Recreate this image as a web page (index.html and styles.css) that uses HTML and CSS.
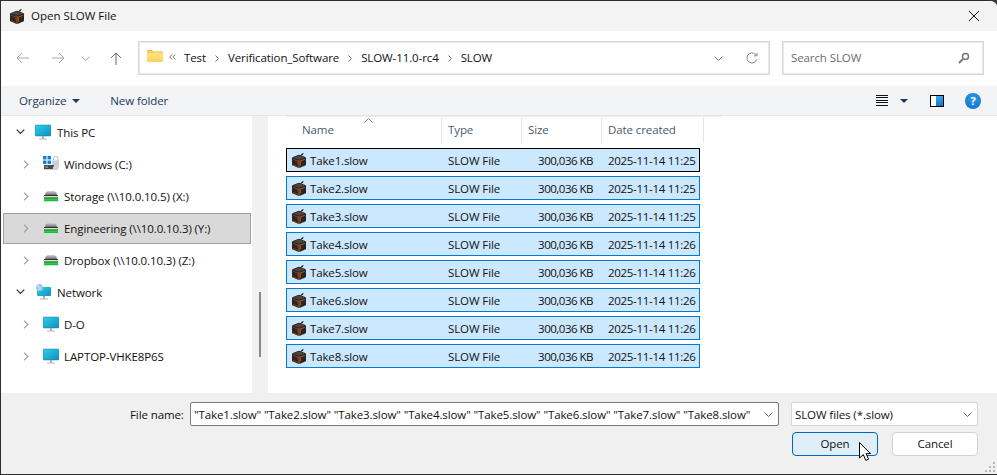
FILE: index.html
```html
<!DOCTYPE html>
<html lang="en">
<head>
<meta charset="utf-8">
<title>Open SLOW File</title>
<link rel="stylesheet" href="styles.css">
</head>
<body>
<svg class="defs" width="0" height="0" aria-hidden="true">
  <defs>
    <linearGradient id="scr" x1="0" y1="0" x2="1" y2="1"><stop offset="0" stop-color="#2fd0e6"/><stop offset="1" stop-color="#0f8ec4"/></linearGradient>
    <linearGradient id="fold" x1="0" y1="0" x2="0" y2="1"><stop offset="0" stop-color="#ffe58f"/><stop offset="1" stop-color="#fcd25c"/></linearGradient>
    <linearGradient id="grn" x1="0" y1="0" x2="0" y2="1"><stop offset="0" stop-color="#5fe85f"/><stop offset="1" stop-color="#1fb040"/></linearGradient>
    <linearGradient id="hood" x1="0" y1="0" x2="0" y2="1"><stop offset="0" stop-color="#d4d4d4"/><stop offset="1" stop-color="#6a6a6a"/></linearGradient>
    <symbol id="cube" viewBox="0 0 16 16">
      <path d="M9.500 4C9.700 2.400 10.800 1.300 12.600 1 12.500 2.700 11.400 3.800 9.500 4Z" fill="#2e2e2e"/>
      <path d="M1 6.200Q1 5.300 1.900 4.900L7 3Q8 2.700 9 3L14.200 4.900Q15 5.300 15 6.200V12.400Q15 13.200 14.200 13.600L9 15.700Q8 16 7 15.700L1.900 13.600Q1 13.200 1 12.400Z" fill="#2a2522"/>
      <path d="M2 5.600 8 3.500l6 2.100L8 7.800Z" fill="#4a4543"/>
      <path d="M8 8v7.500" stroke="#a8501c" stroke-width="1.200"/>
      <path d="M2.200 7.300 6.800 9.100v2.400" fill="none" stroke="#8f4317" stroke-width="1"/>
      <path d="M2.200 12.600 6.800 14.500" fill="none" stroke="#7a3a16" stroke-width="1"/>
      <path d="M13.800 7.300 9.300 9.100v4.400" fill="none" stroke="#b5581e" stroke-width="1"/>
    </symbol>
    <symbol id="monitor" viewBox="0 0 16 16">
      <rect x="0" y="1" width="16" height="11" rx="1" fill="url(#scr)" stroke="#1a7fa8" stroke-width=".5"/>
      <rect x="7" y="12" width="2" height="2.500" fill="#9aa8b0"/>
      <rect x="4" y="14.500" width="8" height="1" fill="#aab4ba"/>
    </symbol>
    <symbol id="drive" viewBox="0 0 16 16">
      <path d="M2.500 5C2.800 3.500 4 3 8 3s5.200.5 5.500 2L14 7H2Z" fill="url(#hood)"/>
      <rect x="1" y="7" width="14" height="1" fill="#2f2f2f"/>
      <rect x="1" y="8" width="14" height="1" fill="#d9dfda"/>
      <rect x="1" y="9" width="14" height="4" fill="url(#grn)"/>
      <rect x="1" y="9.600" width="14" height=".9" fill="#1d6b33"/>
      <rect x="1" y="13" width="14" height="1" fill="#bfe8c6"/>
    </symbol>
    <symbol id="win" viewBox="0 0 16 16">
      <path d="M0 0h3.500v3.500H0zM4.500 0H8v3.500H4.500zM0 4.500h3.500V8H0zM4.500 4.500H8V8H4.500z" fill="#1583d8"/>
      <path d="M10.500 4.500V2.500a2.200 2.200 0 0 1 4.400 0V5" fill="none" stroke="#a9bcca" stroke-width="1"/>
      <rect x="9" y="4.500" width="7" height="6" fill="#c6d0d8"/>
      <rect x="1" y="9" width="10" height="4" fill="#4a4a4a"/>
      <rect x="2" y="10.500" width="3" height="1" fill="#7fd67f"/>
      <rect x="1" y="13" width="13" height="1" fill="#cfd5d0"/>
      <rect x="10" y="10.500" width="5.500" height="3" fill="#c9d3da"/>
    </symbol>
    <symbol id="net" viewBox="0 0 16 16">
      <rect x="2" y="3" width="14" height="9" rx="1" fill="url(#scr)"/>
      <rect x="8" y="12" width="2" height="2.500" fill="#9aa8b0"/>
      <rect x="5" y="14.500" width="8" height="1" fill="#aab4ba"/>
      <circle cx="4.500" cy="3.500" r="3.500" fill="#9fc6e8"/>
      <path d="M2.500 2c1 0 2 .5 2.500 1.500S4 5.500 3.500 6" fill="none" stroke="#e9f3fb" stroke-width="1"/>
    </symbol>
  </defs>
</svg>

<div class="window">
  <header class="titlebar">
    <svg class="ic16"><use href="#cube"/></svg>
    <span class="title">Open SLOW File</span>
    <svg class="close" viewBox="0 0 10 10"><path d="M0 0l10 10M10 0L0 10" stroke="#1a1a1a" stroke-width="1" fill="none"/></svg>
  </header>

  <nav class="navbar">
    <div class="navbtns">
      <svg class="nav-back" viewBox="0 0 14 12"><path d="M13 6H1M6 1 1 6l5 5" fill="none" stroke="#a8a8a8" stroke-width="1"/></svg>
      <svg class="nav-fwd" viewBox="0 0 14 12"><path d="M1 6h12M8 1l5 5-5 5" fill="none" stroke="#a8a8a8" stroke-width="1"/></svg>
      <svg class="nav-down" viewBox="0 0 9 5"><path d="M.5.500l4 4 4-4" fill="none" stroke="#a8a8a8" stroke-width="1"/></svg>
      <svg class="nav-up" viewBox="0 0 12 13"><path d="M6 13V1M1 6l5-5 5 5" fill="none" stroke="#666" stroke-width="1"/></svg>
    </div>
    <div class="address">
      <svg class="folder" viewBox="0 0 16 12"><path d="M0 1a1 1 0 0 1 1-1h4l1.500 1.500H0Z" fill="#f2b632"/><rect y="1.500" width="16" height="10.500" rx="1" fill="url(#fold)"/><rect y="1.500" width="16" height="1" fill="#f3bb3a"/></svg>
      <svg class="crumb-more" viewBox="0 0 7 6"><path d="M3 .5.800 3 3 5.500M6.200.5 4 3l2.200 2.500" fill="none" stroke="#777" stroke-width="1"/></svg>
      <span class="crumb c1">Test</span>
      <svg class="sep" viewBox="0 0 4 7"><path d="M.5.500l3 3-3 3" fill="none" stroke="#666" stroke-width="1"/></svg>
      <span class="crumb">Verification_Software</span>
      <svg class="sep" viewBox="0 0 4 7"><path d="M.5.500l3 3-3 3" fill="none" stroke="#666" stroke-width="1"/></svg>
      <span class="crumb">SLOW-11.0-rc4</span>
      <svg class="sep" viewBox="0 0 4 7"><path d="M.5.500l3 3-3 3" fill="none" stroke="#666" stroke-width="1"/></svg>
      <span class="crumb">SLOW</span>
      <span class="spacer"></span>
      <svg class="addr-down" viewBox="0 0 9 5"><path d="M.5.500l4 4 4-4" fill="none" stroke="#777" stroke-width="1"/></svg>
      <svg class="refresh" viewBox="0 0 12 12"><path d="M10.800 7.200A5 5 0 1 1 9.500 2.400L11 3.800M11 .8v3H8" fill="none" stroke="#888" stroke-width="1"/></svg>
    </div>
    <div class="search">
      <span class="search-text">Search SLOW</span>
      <svg class="lens" viewBox="0 0 12 12"><circle cx="7.500" cy="4.500" r="3" fill="none" stroke="#777" stroke-width="1.500"/><path d="M5 7 1 11" stroke="#777" stroke-width="2"/></svg>
    </div>
  </nav>

  <div class="cmdbar">
    <span class="cmd">Organize</span>
    <span class="tri tri-org"></span>
    <span class="cmd cmd-new">New folder</span>
    <span class="spacer"></span>
    <span class="viewbtn"></span>
    <span class="tri tri-view"></span>
    <span class="pane"><span class="pane-fill"></span></span>
    <span class="help">?</span>
  </div>

  <main class="main">
    <section class="tree">
      <div class="node root"><svg class="chev-open" viewBox="0 0 9 6"><path d="M.7.700 4.500 4.500 8.300.7" fill="none" stroke="#333" stroke-width="1.200"/></svg><svg class="ic16"><use href="#monitor"/></svg><span>This PC</span></div>
      <div class="node"><svg class="chev" viewBox="0 0 6 9"><path d="M1 .7 4.800 4.500 1 8.300" fill="none" stroke="#a0a0a0" stroke-width="1.200"/></svg><svg class="ic16"><use href="#win"/></svg><span>Windows (C:)</span></div>
      <div class="node"><svg class="chev" viewBox="0 0 6 9"><path d="M1 .7 4.800 4.500 1 8.300" fill="none" stroke="#a0a0a0" stroke-width="1.200"/></svg><svg class="ic16"><use href="#drive"/></svg><span>Storage (\\10.0.10.5) (X:)</span></div>
      <div class="node selected"><svg class="chev" viewBox="0 0 6 9"><path d="M1 .7 4.800 4.500 1 8.300" fill="none" stroke="#a0a0a0" stroke-width="1.200"/></svg><svg class="ic16"><use href="#drive"/></svg><span>Engineering (\\10.0.10.3) (Y:)</span></div>
      <div class="node"><svg class="chev" viewBox="0 0 6 9"><path d="M1 .7 4.800 4.500 1 8.300" fill="none" stroke="#a0a0a0" stroke-width="1.200"/></svg><svg class="ic16"><use href="#drive"/></svg><span>Dropbox (\\10.0.10.3) (Z:)</span></div>
      <div class="node root"><svg class="chev-open" viewBox="0 0 9 6"><path d="M.7.700 4.500 4.500 8.300.7" fill="none" stroke="#333" stroke-width="1.200"/></svg><svg class="ic16"><use href="#net"/></svg><span>Network</span></div>
      <div class="node"><svg class="chev" viewBox="0 0 6 9"><path d="M1 .7 4.800 4.500 1 8.300" fill="none" stroke="#a0a0a0" stroke-width="1.200"/></svg><svg class="ic16"><use href="#monitor"/></svg><span>D-O</span></div>
      <div class="node"><svg class="chev" viewBox="0 0 6 9"><path d="M1 .7 4.800 4.500 1 8.300" fill="none" stroke="#a0a0a0" stroke-width="1.200"/></svg><svg class="ic16"><use href="#monitor"/></svg><span>LAPTOP-VHKE8P6S</span></div>
    </section>
    <div class="scrolltrack"><div class="thumb"></div></div>
    <section class="list">
      <div class="thead">
        <div class="th th-name">Name<svg class="sort" viewBox="0 0 9 5"><path d="M.5 4.500l4-4 4 4" fill="none" stroke="#888" stroke-width="1"/></svg></div>
        <div class="th th-type">Type</div>
        <div class="th th-size">Size</div>
        <div class="th th-date">Date created</div>
      </div>
      <div class="rows">
        <div class="row focus"><svg class="ic16"><use href="#cube"/></svg><span class="c-name">Take1.slow</span><span class="c-type">SLOW File</span><span class="c-size">300,036 KB</span><span class="c-date">2025-11-14 11:25</span></div>
        <div class="row"><svg class="ic16"><use href="#cube"/></svg><span class="c-name">Take2.slow</span><span class="c-type">SLOW File</span><span class="c-size">300,036 KB</span><span class="c-date">2025-11-14 11:25</span></div>
        <div class="row"><svg class="ic16"><use href="#cube"/></svg><span class="c-name">Take3.slow</span><span class="c-type">SLOW File</span><span class="c-size">300,036 KB</span><span class="c-date">2025-11-14 11:25</span></div>
        <div class="row"><svg class="ic16"><use href="#cube"/></svg><span class="c-name">Take4.slow</span><span class="c-type">SLOW File</span><span class="c-size">300,036 KB</span><span class="c-date">2025-11-14 11:26</span></div>
        <div class="row"><svg class="ic16"><use href="#cube"/></svg><span class="c-name">Take5.slow</span><span class="c-type">SLOW File</span><span class="c-size">300,036 KB</span><span class="c-date">2025-11-14 11:26</span></div>
        <div class="row"><svg class="ic16"><use href="#cube"/></svg><span class="c-name">Take6.slow</span><span class="c-type">SLOW File</span><span class="c-size">300,036 KB</span><span class="c-date">2025-11-14 11:26</span></div>
        <div class="row"><svg class="ic16"><use href="#cube"/></svg><span class="c-name">Take7.slow</span><span class="c-type">SLOW File</span><span class="c-size">300,036 KB</span><span class="c-date">2025-11-14 11:26</span></div>
        <div class="row"><svg class="ic16"><use href="#cube"/></svg><span class="c-name">Take8.slow</span><span class="c-type">SLOW File</span><span class="c-size">300,036 KB</span><span class="c-date">2025-11-14 11:26</span></div>
      </div>
    </section>
  </main>

  <footer class="footer">
    <div class="line1">
      <label class="fn-label">File name:</label>
      <div class="combo fn-input"><span>"Take1.slow" "Take2.slow" "Take3.slow" "Take4.slow" "Take5.slow" "Take6.slow" "Take7.slow" "Take8.slow"</span><svg class="combo-down" viewBox="0 0 9 5"><path d="M.5.500l4 4 4-4" fill="none" stroke="#666" stroke-width="1"/></svg></div>
      <div class="combo filter"><span>SLOW files (*.slow)</span><svg class="combo-down" viewBox="0 0 9 5"><path d="M.5.500l4 4 4-4" fill="none" stroke="#666" stroke-width="1"/></svg></div>
    </div>
    <div class="line2">
      <button class="btn primary">Open</button>
      <button class="btn">Cancel</button>
    </div>
    <svg class="cursor" viewBox="0 0 12 19"><path d="M.5.500v15.500l3.800-3.400 2.500 5.800 2.800-1.200-2.500-5.600H11.500Z" fill="#fff" stroke="#000" stroke-width="1"/></svg>
    <svg class="grip" viewBox="0 0 10 10"><path d="M8 0h2v2H8zM4 4h2v2H4zM8 4h2v2H8zM0 8h2v2H0zM4 8h2v2H4zM8 8h2v2H8z" fill="#b8b8b8"/></svg>
  </footer>
</div>
</body>
</html>
```

FILE: styles.css
```css
* { box-sizing: border-box; }
html, body { margin: 0; padding: 0; background: #3a3a3a; }
body { width: 997px; height: 475px; overflow: hidden; font-family: "Open Sans", "Noto Sans", "Liberation Sans", sans-serif; font-size: 11.5px; letter-spacing: -0.1px; color: #111; }
.defs { position: absolute; }
svg { display: block; flex: none; }
.ic16 { width: 16px; height: 16px; }
.spacer { flex: 1; }

.window { width: 997px; height: 475px; display: flex; flex-direction: column; border-top: 1px solid #2e2e2e; border-bottom: 1px solid #2e2e2e; border-left: 1px solid #2e2e2e; border-top-right-radius: 7px; overflow: hidden; background: #fff; }

.titlebar { height: 30px; flex: none; display: flex; align-items: center; padding: 0 18px 1px 8px; background: #f3f3f3; }
.title { margin-left: 6px; font-size: 11.5px; letter-spacing: 0; }
.close { width: 10px; height: 10px; margin-left: auto; }

.navbar { height: 55px; flex: none; display: flex; align-items: center; padding: 0 12px 1px 0; background: #fff; }
.navbtns { width: 137px; display: flex; align-items: center; flex: none; padding-left: 15px; }
.nav-back, .nav-fwd { width: 14px; height: 12px; }
.nav-fwd { margin-left: 21px; }
.nav-down { width: 9px; height: 5px; margin-left: 16px; }
.nav-up { width: 12px; height: 13px; margin-left: 20px; }
.address { width: 632px; height: 34px; border: 1px solid #d9d9d9; display: flex; align-items: center; padding: 0 0 2px 8px; flex: none; box-shadow: inset 0 0 0 1px #e8e8e8; }
.folder { width: 16px; height: 12px; margin-bottom: 2px; }
.crumb-more { width: 7px; height: 6px; margin-left: 6px; }
.crumb { white-space: nowrap; }
.c1 { margin-left: 8px; }
.sep { width: 4px; height: 7px; margin: 3px 9px 0 9px; }
.addr-down { width: 9px; height: 5px; margin: 2px 23px 0 0; }
.refresh { width: 12px; height: 12px; margin: 2px 11px 0 0; }
.search { width: 202px; height: 34px; margin-left: 12px; border: 1px solid #d9d9d9; box-shadow: inset 0 0 0 1px #e8e8e8; display: flex; align-items: center; justify-content: space-between; padding: 0 13px 2px 8px; flex: none; }
.search-text { color: #6d6d6d; }
.lens { width: 12px; height: 12px; margin-top: 2px; }

.cmdbar { height: 30px; flex: none; display: flex; align-items: center; padding: 0 16px 0 18px; background: #f3f4f6; border-bottom: 1px solid #e5e5e5; }
.cmd { color: #1e395b; }
.tri { width: 0; height: 0; border-left: 4px solid transparent; border-right: 4px solid transparent; border-top: 4px solid #1e395b; }
.tri-org { margin-left: 6px; }
.cmd-new { margin-left: 30px; }
.viewbtn { width: 12px; height: 11px; margin-right: 12px; background: repeating-linear-gradient(#111 0 1px, transparent 1px 2.5px); }
.tri-view { margin-right: 22px; }
.pane { width: 14px; height: 12px; border: 1px solid #000; background: #fff; display: flex; justify-content: flex-end; margin-right: 21px; }
.pane-fill { width: 7px; background: linear-gradient(#3aa7ec, #0f78d0); }
.help { width: 16px; height: 16px; border-radius: 50%; background: radial-gradient(circle at 50% 35%, #2d9be8, #0b6fc4); color: #fff; font-weight: 700; font-size: 11px; line-height: 16px; text-align: center; }

.main { height: 277px; flex: none; display: flex; background: #fff; }
.tree { width: 251px; flex: none; padding: 0 1px 0 2px; overflow: hidden; }
.node { height: 32px; display: flex; align-items: center; padding-left: 20px; }
.node > span { margin-left: 5px; white-space: nowrap; }
.root { padding-left: 11px; }
.root > span { margin-left: 6px; }
.chev { width: 6px; height: 9px; margin-right: 14px; }
.chev-open { width: 9px; height: 6px; margin-left: 2px; }
.root .ic16 { margin-left: 10px; }
.selected { height: 31px; margin-top: 1px; background: #d9d9d9; border: 1px solid #a0a0a0; padding-left: 19px; padding-bottom: 1px; }
.scrolltrack { width: 16px; flex: none; background: #f1f1f1; position: relative; }
.thumb { position: absolute; left: 7px; top: 176px; width: 2px; height: 65px; background: #8a8a8a; }
.list { flex: 1; min-width: 0; padding-left: 18px; }
.thead { display: flex; height: 27px; width: 436px; border-top: 1px solid #f0f0f0; }
.th { color: #4a5a6a; border-right: 1px solid #e5e5e5; display: flex; align-items: center; position: relative; padding-left: 6px; padding-bottom: 2px; }
.th-name { width: 156px; padding-left: 16px; }
.th-type, .th-size { width: 80px; }
.th-date { width: 102px; }
.sort { position: absolute; left: 78px; top: 1px; width: 9px; height: 5px; }
.rows { display: flex; flex-direction: column; gap: 4px; margin-top: 5px; }
.row { width: 414px; height: 24px; background: #cce8ff; border: 1px solid #0078d7; display: grid; grid-template-columns: 16px 141px 65px 80px auto; align-items: center; padding-left: 4px; }
.row.focus { border-color: #000; }
.c-name { padding-left: 3px; letter-spacing: -0.14px; }
.c-size { text-align: right; white-space: nowrap; letter-spacing: -0.5px; }
.c-date { padding-left: 15px; white-space: nowrap; letter-spacing: -0.3px; }

.footer { flex: 1; min-height: 0; background: #f0f0f0; padding-top: 9px; position: relative; }
.line1 { display: flex; align-items: center; height: 24px; padding-left: 129px; }
.fn-label { width: 56px; }
.combo { height: 24px; display: flex; align-items: center; justify-content: space-between; background: #fff; white-space: nowrap; padding: 0 5px 0 3px; overflow: hidden; }
.fn-input { width: 589px; margin-left: 4px; border: 1px solid #7a7a7a; border-radius: 2px; }
.filter { width: 187px; margin-left: 12px; border: 1px solid #d5d5d5; border-radius: 2px; }
.combo-down { width: 9px; height: 5px; margin-left: 4px; }
.line2 { display: flex; gap: 14px; margin-top: 6px; padding-left: 791px; }
.btn { width: 86px; height: 24px; border: 1px solid #d0d0d0; border-radius: 4px; background: #fff; font: inherit; letter-spacing: inherit; color: #111; padding: 0 0 2px; }
.primary { border-color: #0067c0; background: #e0eef9; }
.cursor { position: absolute; left: 858px; top: 49px; width: 12px; height: 19px; }
.grip { position: absolute; right: 2px; bottom: 2px; width: 10px; height: 10px; }
```
